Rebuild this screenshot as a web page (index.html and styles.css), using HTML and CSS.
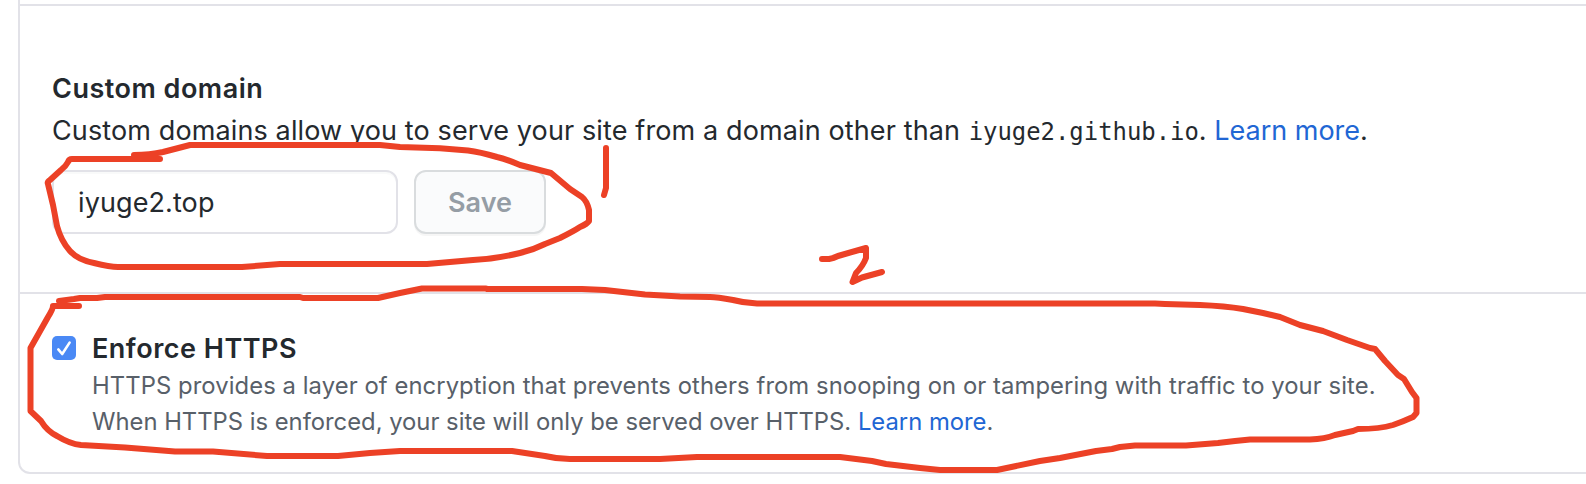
FILE: index.html
```html
<!DOCTYPE html>
<html lang="en">
<head>
<meta charset="utf-8">
<title>Custom domain</title>
<link rel="stylesheet" href="styles.css">
</head>
<body>
<main class="page">
  <div class="box">
    <section class="row row-domain">
      <h2 class="heading">Custom domain</h2>
      <p class="desc"><span class="desc-text">Custom domains allow you to serve your site from a domain other than</span> <code class="host">iyuge2.github.io</code>. <a class="link" href="#">Learn more</a>.</p>
      <form class="form">
        <input class="field" type="text" value="iyuge2.top" aria-label="Custom domain">
        <button class="save" type="button" disabled>Save</button>
      </form>
    </section>
    <section class="row row-https">
      <span class="check" role="checkbox" aria-checked="true">
        <svg width="24" height="24" viewBox="0 0 24 24"><path d="M6.300 13.400 10.200 18 17.600 6.600" fill="none" stroke="#fff" stroke-width="2.600" stroke-linecap="round" stroke-linejoin="round"/></svg>
      </span>
      <div class="https">
        <h2 class="heading heading-https">Enforce HTTPS</h2>
        <p class="note"><span class="note-one">HTTPS provides a layer of encryption that prevents others from snooping on or tampering with traffic to your site.</span><br><span class="note-two">When HTTPS is enforced, your site will only be served over HTTPS. <a class="link" href="#">Learn more</a>.</span></p>
      </div>
    </section>
  </div>
  <svg class="marks" width="1586" height="484" viewBox="0 0 1586 484">
    <path d="M160 159H72Q69 159 68 162Q66 166 61 170L50 180Q47 182 48 184L53 205L57 226Q61 241 70 251Q78 260 94 263Q110 267 118 267H242L280 264H427L473 260Q495 259 520 253Q533 250 545 244L560 238Q574 231 580 227Q587 224 589 221V210Q587 201 582 197L570 189L551 173L520 165Q506 159 497 157Q480 152 468 150.500L440 148.300L400 147L380 145H190L163 152Q150 155 134 155"/>
    <path d="M606 148V188L604 195"/>
    <path d="M822 259H829Q834 258 838 256L866 248V258Q863 266 856 273L852.500 282L862 277.500L882 272"/>
    <path d="M79 306H53Q53 309 48 317L30.500 348V411L41 421Q47 431 57 436Q70 444 81 445L125 447.500L175 451.500H213L267 456H338L370 453L400 451H512L545 456Q557 459 570 459H660L697 457H840L872 461L886 464L920 468L940 470H997L1040 461L1060 458L1096 451L1112 449L1120 447L1135 445.500H1186L1218 443L1235 441L1250 439.500H1310Q1325 439 1335 435L1353 431L1358 429Q1380 429 1393 425Q1402 422 1413 417L1416.500 413V398L1412 392L1404 379L1398 375L1385 361L1375 349L1370 348L1347 340L1323 331L1300 325L1280 317L1263 313L1243 309Q1225 306 1200 305L1165 304L1155 303.500H757Q744 303 733 300Q717 297 710 297L680 296.500L645 294.500L605 290L582 289H487L486 288.500H422L400 293L378 298H303L300 297H105L97 298H80L74 299L59 301"/>
  </svg>
</main>
</body>
</html>
```
FILE: styles.css
```css
* {
  box-sizing: border-box;
}

body {
  margin: 0;
  background: #fff;
  color: #24292e;
  font-family: Inter, "Liberation Sans", sans-serif;
  font-size: 27px;
}

.page {
  position: relative;
  width: 1586px;
  height: 484px;
  overflow: hidden;
  padding-left: 18px;
}

.box {
  width: 1700px;
  height: 474px;
  border: 2px solid #e2e2e8;
  border-top: 0;
  border-radius: 0 0 12px 12px;
  padding-top: 4px;
}

.row {
  border-top: 2px solid #e2e2e8;
  padding-left: 32px;
}

.row-domain {
  height: 288px;
  padding-top: 62px;
}

.heading {
  margin: 0;
  font-size: 27px;
  font-weight: 600;
  letter-spacing: 0.5px;
  line-height: 42px;
  white-space: nowrap;
}

.desc {
  margin: 0;
  line-height: 42px;
  white-space: nowrap;
}

.desc-text {
  letter-spacing: 0.12px;
}

.host {
  margin-left: 1px;
  font-family: "DejaVu Sans Mono", monospace;
  font-size: 23.9px;
}

.link {
  color: #2166d4;
  text-decoration: none;
}

.form {
  display: flex;
  gap: 16px;
  margin-top: 17px;
}

.field {
  width: 346px;
  height: 64px;
  padding: 0 24px;
  border: 2px solid #e2e2e8;
  border-radius: 12px;
  background: #fff;
  box-shadow: inset 0 2px 0 rgba(225, 228, 232, 0.2);
  color: #24292e;
  font: inherit;
  letter-spacing: 0.1px;
}

.save {
  width: 132px;
  height: 64px;
  padding: 0;
  border: 2px solid #d9dcde;
  border-radius: 12px;
  background: #fafbfc;
  box-shadow: 0 2px 0 rgba(27, 31, 35, 0.04);
  color: #959da5;
  font: inherit;
  font-weight: 600;
}

.row-https {
  display: flex;
  gap: 16px;
  padding-top: 34px;
}

.check {
  width: 24px;
  height: 24px;
  margin-top: 8px;
  border-radius: 5px;
  background: #4a89f5;
}

.check svg {
  display: block;
}

.heading-https {
  line-height: 41px;
}

.note {
  margin: -1px 0 0;
  color: #586069;
  font-size: 23.8px;
  line-height: 36px;
  white-space: nowrap;
}

.note-one {
  letter-spacing: 0.08px;
}

.marks {
  position: absolute;
  top: 0;
  left: 0;
  fill: none;
  stroke: #ec4126;
  stroke-width: 6;
  stroke-linecap: round;
  stroke-linejoin: round;
}
```
